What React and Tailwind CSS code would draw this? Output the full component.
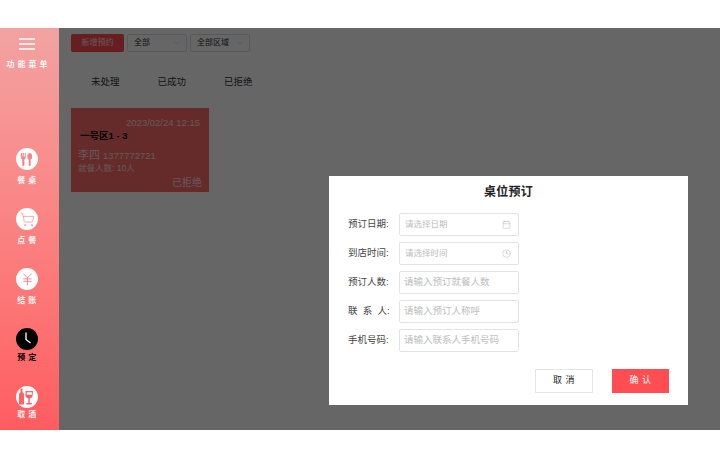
import { ChevronDown, ShoppingCart, JapaneseYen, Calendar, Clock } from "lucide-react";

const MenuIcon = () => (
  <svg viewBox="0 0 16 12" className="w-[16px] h-[12px]" fill="none" stroke="#ffffff" strokeWidth="1.5">
    <path d="M0 1h16M0 6h16M0 11h16" />
  </svg>
);

const UtensilsIcon = () => (
  <svg viewBox="0 0 22 22" className="w-[22px] h-[22px]" fill="#f4878a">
    <path d="M5.700 5h.8v3.600h.7V5h.9v3.600h.7V5h.9v4.600c0 1-.7 1.600-1.300 1.900V17a1.100 1.100 0 0 1-2.200 0v-5.500c-.7-.3-1.300-.9-1.300-1.900V5z" />
    <path d="M13.800 5c1.400 0 2.400 1.600 2.400 3.400 0 1.500-.7 2.800-1.500 3.200V17a1 1 0 0 1-2 0v-5.400c-.8-.4-1.400-1.700-1.400-3.200C11.300 6.600 12.400 5 13.800 5z" />
  </svg>
);

const DrinksIcon = () => (
  <svg viewBox="0 0 22 22" className="w-[22px] h-[22px]" fill="#fd6266">
    <path d="M4.500 2.500h2v3.700c1 .6 1.500 1.500 1.500 2.600V18.500H3V8.800c0-1.100.5-2 1.500-2.600V2.500z" />
    <path d="M9.500 5h7.500l-.3 4.500c-.2 1.600-1.400 2.700-2.900 2.900V17h2v1.500h-5.500V17h2v-4.600c-1.500-.2-2.700-1.300-2.900-2.900L9.500 5zm1.200 1.200.1 2.600h5l.1-2.600h-5.200z" />
  </svg>
);

const ClockIcon = () => (
  <svg viewBox="0 0 22 22" className="w-[22px] h-[22px]" fill="none" stroke="#ffffff" strokeWidth="1.3">
    <path d="M10 4.500V11.500L14.500 15" />
  </svg>
);

const navItems = [
  { label: "餐 桌", icon: <UtensilsIcon />, top: "mt-[77px]", gap: "mt-[6px]" },
  { label: "点 餐", icon: <ShoppingCart className="w-[15px] h-[15px] text-[#f97c7f]" strokeWidth={1} />, top: "mt-[22px]", gap: "mt-[6px]" },
  { label: "结 账", icon: <JapaneseYen className="w-[15px] h-[15px] text-[#f97276]" strokeWidth={1.25} />, top: "mt-[22px]", gap: "mt-[6px]" },
  { label: "预 定", icon: <ClockIcon />, active: true, top: "mt-[22px]", gap: "mt-[3px]" },
  { label: "取 酒", icon: <DrinksIcon />, top: "mt-[23px]", gap: "mt-[2px]" },
];

const fields = [
  { label: "预订日期:", placeholder: "请选择日期", icon: <Calendar className="w-[9px] h-[9px]" strokeWidth={1.25} />, picker: true },
  { label: "到店时间:", placeholder: "请选择时间", icon: <Clock className="w-[9px] h-[9px]" strokeWidth={1.25} />, picker: true },
  { label: "预订人数:", placeholder: "请输入预订就餐人数" },
  { label: "联  系  人:", placeholder: "请输入预订人称呼" },
  { label: "手机号码:", placeholder: "请输入联系人手机号码" },
];

const SelectBox = ({ label, width }) => (
  <div className={`${width} h-[18px] flex items-center justify-between pl-[6px] pr-[4px] border border-[#dcdfe6] rounded-[2px] text-[8px] text-[#333333]`}>
    <span>{label}</span>
    <ChevronDown className="w-[10px] h-[10px] text-[#bbbbbb]" strokeWidth={1} />
  </div>
);

export default function App() {
  return (
    <div className="w-[720px] h-[450px] bg-white pt-[28px] pb-[20px] overflow-hidden font-['Liberation_Sans','Noto_Sans_CJK_SC',sans-serif]">
      <div className="relative h-[402px] flex">
        <aside className="relative z-20 w-[59px] h-full shrink-0 pr-[5px] flex flex-col items-center bg-gradient-to-b from-[#f2a2a2] to-[#ff5c60]">
          <div className="h-[20px] mt-[6px] flex items-center">
            <MenuIcon />
          </div>
          <div className="mt-[5px] pl-[3px] text-[8px] leading-[12px] font-bold tracking-[3px] text-white/90 whitespace-nowrap">功能菜单</div>
          {navItems.map((item) => (
            <div key={item.label} className={`flex flex-col items-center ${item.top}`}>
              <div className={`w-[22px] h-[22px] rounded-full flex items-center justify-center ${item.active ? "bg-black" : "bg-white"}`}>
                {item.icon}
              </div>
              <div className={`${item.gap} text-[8px] leading-[10px] font-bold tracking-[0.5px] whitespace-pre ${item.active ? "text-black" : "text-white/90"}`}>
                {item.label}
              </div>
            </div>
          ))}
        </aside>

        <main className="flex-1 pl-[12px] pt-[6px]">
          <div className="flex items-center gap-[3px]">
            <button className="w-[53px] h-[18px] rounded-[2px] bg-[#ff4d51] text-[8px] text-white/80">新增预约</button>
            <SelectBox label="全部" width="w-[60px]" />
            <SelectBox label="全部区域" width="w-[60px]" />
          </div>
          <div className="flex mt-[23px] pl-[20px] gap-[38px] text-[9.5px] leading-[14px] text-[#333333]">
            <span>未处理</span>
            <span>已成功</span>
            <span>已拒绝</span>
          </div>
          <div className="w-[138px] h-[84px] mt-[19px] bg-[#fd6c6c] pt-[9px] px-[7px] text-white/75">
            <div className="text-right text-[9.5px] leading-[11px] pr-[2px]">2023/02/24 12:15</div>
            <div className="mt-[2px] pl-[2px] text-[9.5px] leading-[11px] font-bold text-black">一号区1 - 3</div>
            <div className="mt-[8px] flex items-baseline gap-[3px] leading-[13px]">
              <span className="text-[11px]">李四</span>
              <span className="text-[9.5px]">1377772721</span>
            </div>
            <div className="mt-[1px] text-[8.5px] leading-[11px]">就餐人数: 10人</div>
            <div className="mt-[3px] text-right text-[10px] leading-[12px]">已拒绝</div>
          </div>
        </main>

        <div className="absolute inset-0 z-10 bg-black/60" />

        <div className="absolute z-30 left-[329px] top-[148px] w-[359px] h-[229px] bg-white">
          <h2 className="pt-[8px] text-center text-[12px] leading-[16px] font-bold tracking-[0.25px] text-[#222222]">桌位预订</h2>
          <div className="mt-[13px] pl-[19px] flex flex-col">
            {fields.map((field) => (
              <div key={field.label} className="h-[23px] mb-[6px] flex items-center">
                <span className="w-[51px] text-[9.5px] whitespace-pre text-[#444444]">{field.label}</span>
                <div className={`w-[120px] h-[23px] flex items-center justify-between border border-[#e3e3e3] rounded-[2px] ${field.picker ? "pl-[5px] pr-[7px]" : "pl-[4px]"}`}>
                  <span className={`whitespace-nowrap text-[#bdbdbd] ${field.picker ? "text-[8.5px]" : "text-[9.5px]"}`}>{field.placeholder}</span>
                  {field.icon && <span className="text-[#b5b5b5]">{field.icon}</span>}
                </div>
              </div>
            ))}
          </div>
          <div className="mt-[11px] pr-[19px] flex justify-end gap-[19px]">
            <button className="w-[58px] h-[24px] border border-[#e5e5e5] text-[9px] tracking-[0.5px] whitespace-pre text-[#222222]">取 消</button>
            <button className="w-[57px] h-[24px] bg-[#ff4d51] text-[9px] tracking-[0.5px] whitespace-pre text-white">确 认</button>
          </div>
        </div>
      </div>
    </div>
  );
}
